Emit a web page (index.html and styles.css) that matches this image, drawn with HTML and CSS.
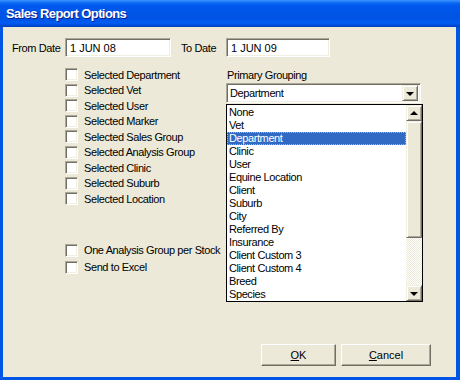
FILE: index.html
```html
<!DOCTYPE html>
<html lang="en">
<head>
  <meta charset="UTF-8">
  <title>Sales Report Options</title>
  <link rel="stylesheet" href="styles.css">
</head>
<body>

<div class="window">
  <div class="titlebar">Sales Report Options</div>

  <div class="frame">
    <div class="client">

      <div class="dates">
        <label class="lbl-from" for="fromDate">From Date</label>
        <input type="text" id="fromDate" class="field from" value="1 JUN 08">
        <label class="lbl-to" for="toDate">To Date</label>
        <input type="text" id="toDate" class="field to" value="1 JUN 09">
      </div>

      <div class="body">
        <div class="checks">
          <label class="check"><span class="box"></span>Selected Department</label>
          <label class="check"><span class="box"></span>Selected Vet</label>
          <label class="check"><span class="box"></span>Selected User</label>
          <label class="check"><span class="box"></span>Selected Marker</label>
          <label class="check"><span class="box"></span>Selected Sales Group</label>
          <label class="check"><span class="box"></span>Selected Analysis Group</label>
          <label class="check"><span class="box"></span>Selected Clinic</label>
          <label class="check"><span class="box"></span>Selected Suburb</label>
          <label class="check"><span class="box"></span>Selected Location</label>
        </div>

        <div class="grouping">
          <div class="group-label">Primary Grouping</div>
          <div class="combo">
            <span class="combo-text">Department</span>
            <span class="sbtn combo-btn"><i class="arrow down"></i></span>

            <!-- open dropdown list lies over the dialog -->
            <div class="dropdown">
              <ul class="items">
                <li>None</li>
                <li>Vet</li>
                <li class="selected">Department</li>
                <li>Clinic</li>
                <li>User</li>
                <li>Equine Location</li>
                <li>Client</li>
                <li>Suburb</li>
                <li>City</li>
                <li>Referred By</li>
                <li>Insurance</li>
                <li>Client Custom 3</li>
                <li>Client Custom 4</li>
                <li>Breed</li>
                <li>Species</li>
              </ul>
              <div class="scrollbar">
                <span class="sbtn"><i class="arrow up"></i></span>
                <span class="thumb"></span>
                <span class="track"></span>
                <span class="sbtn"><i class="arrow down"></i></span>
              </div>
            </div>
          </div>
        </div>
      </div>

      <div class="extra">
        <label class="check"><span class="box"></span>One Analysis Group per Stock</label>
        <label class="check"><span class="box"></span>Send to Excel</label>
      </div>

      <div class="buttons">
        <button class="btn ok"><u>O</u>K</button>
        <button class="btn cancel"><u>C</u>ancel</button>
      </div>

    </div>
  </div>
</div>

</body>
</html>
```

FILE: styles.css
```css
* { box-sizing: border-box; }
body {
  margin: 0;
  font-family: 'Liberation Sans', Arial, sans-serif;
  font-size: 11px;
  letter-spacing: -0.4px;
  color: #000;
  background: #fff;
}
.window {
  width: 460px;
  height: 380px;
  display: flex;
  flex-direction: column;
}
.titlebar {
  height: 27px;
  padding: 5px 0 0 6px;
  font-family: 'Liberation Sans', Arial, sans-serif;
  font-weight: bold;
  font-size: 13px;
  letter-spacing: -0.6px;
  line-height: 18px;
  color: #fff;
  text-shadow: 1px 1px 0 #0A1E8C;
  background: linear-gradient(to bottom, #3D95FF 0, #0A68F5 3px, #0058EE 6px, #0053E3 18px, #005CF2 23px, #0047D0 26px, #003CB8 27px);
}
.frame {
  flex: 1;
  display: flex;
  padding: 0 4px 3px 3px;
  background: #0055E5;
}
.client {
  flex: 1;
  display: flex;
  flex-direction: column;
  background: #ECE9D8;
  padding: 11px 25px 11px 8px;
}

/* sunken 3d edges */
.field, .box, .combo {
  background: #fff;
  border: 1px solid;
  border-color: #ACA899 #fff #fff #ACA899;
  box-shadow: inset 1px 1px 0 #716F64, inset -1px -1px 0 #F1EFE2;
}

.dates {
  display: flex;
  align-items: center;
  height: 19px;
}
.lbl-from { width: 54px; padding-left: 1px; }
.lbl-to { width: 45px; margin-left: 10px; }
.field {
  height: 19px;
  padding: 0 0 0 4px;
  font: inherit;
  letter-spacing: 0;
  font-size: 11px;
  color: #000;
  outline: none;
}
.field.from { width: 106px; }
.field.to { width: 104px; }

.body {
  display: flex;
  margin-top: 10px;
}
.checks {
  width: 161px;
  margin-left: 54px;
}
.check {
  display: flex;
  align-items: center;
  height: 15.5px;
  white-space: nowrap;
}
.box {
  width: 13px;
  height: 13px;
  margin-right: 6px;
  flex: none;
}

.grouping {
  width: 196px;
  padding-top: 2px;
}
.group-label {
  height: 14px;
  line-height: 13px;
  padding-left: 1px;
}
.combo {
  position: relative;
  width: 195px;
  height: 20px;
  display: flex;
  align-items: center;
  padding: 0 2px 0 3px;
}
.combo-text { flex: 1; }

/* classic raised buttons */
.sbtn {
  display: flex;
  align-items: center;
  justify-content: center;
  width: 16px;
  height: 16px;
  background: #ECE9D8;
  border: 1px solid;
  border-color: #F1EFE2 #716F64 #716F64 #F1EFE2;
  box-shadow: inset 1px 1px 0 #fff, inset -1px -1px 0 #ACA899;
}
.arrow {
  width: 0;
  height: 0;
  border-left: 4px solid transparent;
  border-right: 4px solid transparent;
}
.arrow.down { border-top: 4px solid #000; margin-top: 1px; }
.arrow.up { border-bottom: 4px solid #000; margin-top: -1px; }

.dropdown {
  position: absolute;
  top: 20px;
  left: -1px;
  width: 197px;
  height: 198px;
  display: flex;
  background: #fff;
  border: 1px solid #000;
  z-index: 2;
}
.items {
  list-style: none;
  margin: 0;
  padding: 1px 0 0 0;
  flex: 1;
}
.items li {
  height: 13px;
  line-height: 12px;
  padding-left: 1px;
  border: 1px solid transparent;
  border-width: 0 1px;
}
.items li.selected {
  background: #316AC5;
  color: #fff;
  border: 1px dotted #E8B830;
  line-height: 11px;
}
.scrollbar {
  width: 16px;
  display: flex;
  flex-direction: column;
}
.thumb {
  height: 117px;
  background: #ECE9D8;
  border: 1px solid;
  border-color: #F1EFE2 #716F64 #716F64 #F1EFE2;
  box-shadow: inset 1px 1px 0 #fff, inset -1px -1px 0 #ACA899;
}
.track {
  flex: 1;
  background: repeating-conic-gradient(#fff 0 25%, #ECE9D8 0 50%) 0 0 / 2px 2px;
}

.extra {
  margin: 35px 0 0 54px;
}
.extra .check { height: 17.3px; }

.buttons {
  margin-top: auto;
  display: flex;
  justify-content: flex-end;
  gap: 5px;
}
.btn {
  height: 22px;
  font: inherit;
  letter-spacing: 0;
  color: #000;
  background: #ECE9D8;
  border: 1px solid;
  border-color: #fff #716F64 #716F64 #fff;
  box-shadow: inset -1px -1px 0 #ACA899;
  padding: 0;
}
.btn.ok { width: 75px; }
.btn.cancel { width: 90px; }
```
